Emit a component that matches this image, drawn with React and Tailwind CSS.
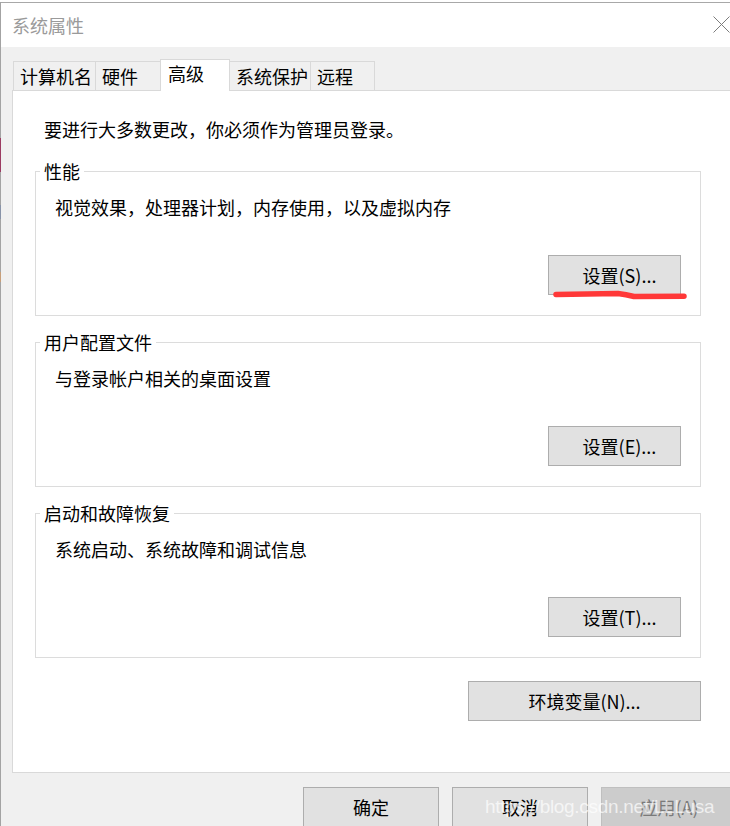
import React from 'react';

const font = "font-['Noto_Sans_CJK_SC','Microsoft_YaHei',sans-serif]";

const Btn = ({ label, className = '', disabled = false }) => (
    <div
        className={`flex items-center justify-center border text-[18px] leading-[24px] ${
            disabled
                ? 'border-[#bfbfbf] bg-[#cccccc] text-[#7a7a7a]'
                : 'border-[#adadad] bg-[#e1e1e1] text-black'
        } ${className}`}
    >
        {label}
    </div>
);

const Group = ({ title, desc, button, mark = false }) => (
    <fieldset className="w-[666px] border border-[#dcdcdc]">
        <legend className="ml-[4px] px-[4px] text-[18px] leading-[24px]">{title}</legend>
        <div className="pl-[19px] pt-[12px] text-[18px] leading-[24px]">{desc}</div>
        <div className="flex justify-end pr-[19px] pt-[36px] pb-[20px]">
            <div className="relative">
                <Btn label={button} className="h-[40px] w-[133px] pl-[10px]" />
                {/* red hand-drawn underline */}
                {mark && (
                    <svg
                        className="pointer-events-none absolute left-0 top-0 overflow-visible"
                        width="145"
                        height="50"
                    >
                        <path
                            d="M8 39.5 L70 38.5 Q78 39.5 86 41.5 L136 41.3"
                            fill="none"
                            stroke="#ff3838"
                            strokeWidth="5.5"
                            strokeLinecap="round"
                        />
                    </svg>
                )}
            </div>
        </div>
    </fieldset>
);

const tabs = [
    { name: '计算机名', w: 'w-[83px]' },
    { name: '硬件', w: 'w-[66px]' },
    { name: '高级', w: 'w-[70px]', active: true },
    { name: '系统保护', w: 'w-[82px]' },
    { name: '远程', w: 'w-[65px]' },
];

export default function App() {
    return (
        <div className={`relative flex h-[826px] w-[730px] overflow-hidden bg-white ${font}`}>
            {/* window edge behind */}
            <div className="flex w-px shrink-0 flex-col pt-[2px]">
                <div className="h-[136px] bg-[#a3a3a3]" />
                <div className="h-[34px] bg-[#9c3c62]" />
                <div className="h-[33px] bg-[#a3a3a3]" />
                <div className="h-[14px] bg-[#8893a8]" />
                <div className="h-[53px] bg-[#a3a3a3]" />
                <div className="h-[10px] bg-[#c79f7a]" />
                <div className="flex-1 bg-[#a3a3a3]" />
            </div>

            <div className="flex min-w-0 flex-1 flex-col pt-[2px]">
                <div className="flex min-w-0 flex-1 flex-col overflow-hidden border-t border-[#a8a8a8]">
                    {/* title bar */}
                    <div className="flex h-[44px] shrink-0 items-center justify-between bg-white pl-[11px]">
                        <span className="text-[18px] leading-[24px] text-[#9a9a9a]">系统属性</span>
                        <svg width="17" height="17" className="-mt-[2px] shrink-0">
                            <path d="M0.5 0.5 L16.5 16.5 M16.5 0.5 L0.5 16.5" stroke="#7c7c7c" strokeWidth="1" />
                        </svg>
                    </div>

                    {/* body */}
                    <div className="flex flex-1 flex-col bg-[#f0f0f0] pt-[12px]">
                        {/* tabs */}
                        <div className="flex h-[31px] items-end pl-[13px]">
                            {tabs.map((t) =>
                                t.active ? (
                                    <div
                                        key={t.name}
                                        className={`relative z-10 -mb-px -ml-px h-[32px] shrink-0 border-x border-t border-[#d9d9d9] bg-white pl-[7px] pt-[1px] text-[18px] leading-[24px] ${t.w}`}
                                    >
                                        {t.name}
                                    </div>
                                ) : (
                                    <div
                                        key={t.name}
                                        className={`-ml-px h-[29px] shrink-0 border-x border-t border-[#d9d9d9] bg-[#f0f0f0] pl-[6px] pt-[2px] text-[18px] leading-[24px] ${t.w}`}
                                    >
                                        {t.name}
                                    </div>
                                )
                            )}
                        </div>

                        {/* panel */}
                        <div className="ml-[11px] flex h-[683px] w-[740px] shrink-0 flex-col border border-[#d9d9d9] bg-white pl-[22px] pt-[26px]">
                            <div className="ml-[9px] text-[18px] leading-[24px]">
                                要进行大多数更改，你必须作为管理员登录。
                            </div>
                            <div className="mt-[18px] flex flex-col gap-[14px]">
                                <Group title="性能" desc="视觉效果，处理器计划，内存使用，以及虚拟内存" button="设置(S)..." mark />
                                <Group title="用户配置文件" desc="与登录帐户相关的桌面设置" button="设置(E)..." />
                                <Group title="启动和故障恢复" desc="系统启动、系统故障和调试信息" button="设置(T)..." />
                            </div>
                            <div className="mt-[23px] flex w-[666px] justify-end">
                                <Btn label="环境变量(N)..." className="h-[40px] w-[233px]" />
                            </div>
                        </div>

                        {/* dialog buttons */}
                        <div className="mt-[14px] flex gap-[13px] pl-[302px]">
                            <Btn label="确定" className="h-[40px] w-[136px] shrink-0" />
                            <Btn label="取消" className="h-[40px] w-[136px] shrink-0" />
                            <Btn label="应用(A)" className="h-[40px] w-[136px] shrink-0" disabled />
                        </div>
                    </div>
                </div>
            </div>

            {/* csdn watermark */}
            <div className="pointer-events-none absolute left-[485px] top-[795px] font-['Liberation_Sans',sans-serif] text-[19px] leading-[24px] tracking-[-0.3px] text-white/70">
                https://blog.csdn.net/LLLusa
            </div>
        </div>
    );
}
